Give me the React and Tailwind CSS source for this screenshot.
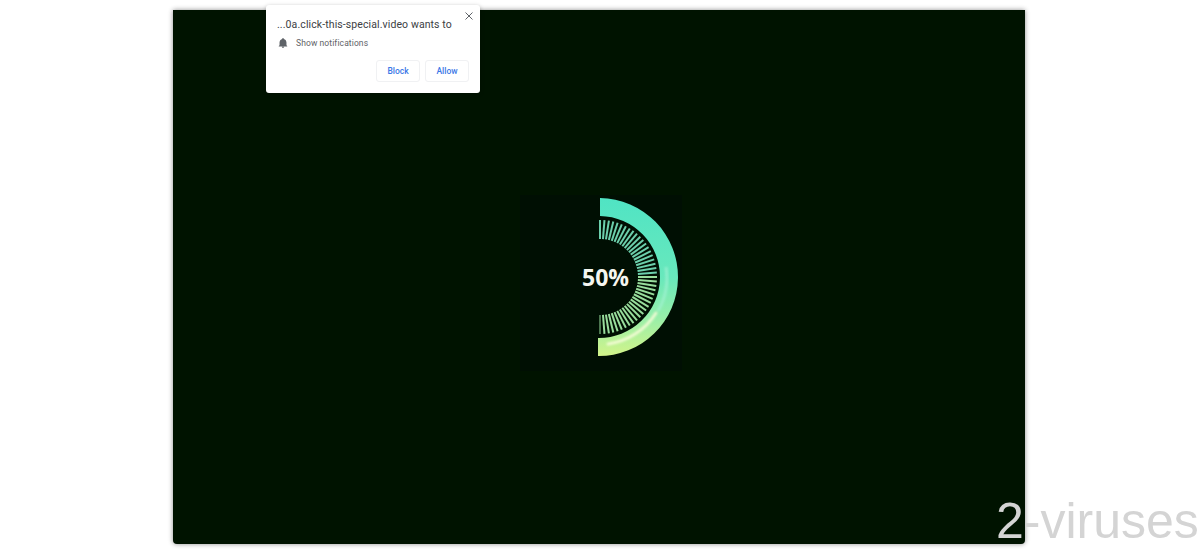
const CX = 80;
const CY = 82;

// tick marks of the inner half ring
const ticks = Array.from({ length: 41 }, (_, i) => {
  const a = (-90 + (i * 180) / 40) * (Math.PI / 180);
  return {
    x1: CX + 38 * Math.cos(a),
    y1: CY + 38 * Math.sin(a),
    x2: CX + 57 * Math.cos(a),
    y2: CY + 57 * Math.sin(a),
  };
});

const Spinner = () => (
  <div className="relative w-[162px] h-[176px] bg-[#000f03]">
    <svg width="162" height="176" viewBox="0 0 162 176" className="block">
      <defs>
        <linearGradient id="band" x1="0" y1="0" x2="0" y2="1">
          <stop offset="0" stopColor="#50e4c4" />
          <stop offset="0.5" stopColor="#68e8bc" />
          <stop offset="0.75" stopColor="#96eeaa" />
          <stop offset="1" stopColor="#d2f48a" />
        </linearGradient>
        <filter id="soft" x="-20%" y="-20%" width="140%" height="140%">
          <feGaussianBlur stdDeviation="1.2" />
        </filter>
      </defs>
      <path d="M80 3 A79 79 0 0 1 78 161 L78 143 A61 61 0 0 0 80 21 Z" fill="url(#band)" />
      <path d="M146 72 A67 67 0 0 1 138 116" fill="none" stroke="#a8f4d8" strokeWidth="3" opacity="0.6" filter="url(#soft)" />
      <path d="M136 118 A68 68 0 0 1 88 149" fill="none" stroke="#f6fcd8" strokeWidth="3" strokeLinecap="round" opacity="0.9" filter="url(#soft)" />
      {ticks.map((t, i) => (
        <line
          key={i}
          x1={t.x1}
          y1={t.y1}
          x2={t.x2}
          y2={t.y2}
          stroke={i < 20 ? '#6ccfac' : '#98dd9c'}
          strokeWidth="2"
          opacity={i === 40 ? 0.5 : 1}
        />
      ))}
    </svg>
    <span className="absolute left-[62px] top-[67px] font-['Open_Sans',sans-serif] font-bold text-[23px] leading-[30px] text-[#f4f6f0]">
      50%
    </span>
  </div>
);

const Popup = () => (
  <div className="absolute left-[266px] top-[5px] w-[214px] h-[88px] bg-white rounded-[3px] shadow-[0_1px_4px_rgba(0,0,0,0.25)] px-[11px] pt-[13px] font-['Roboto',sans-serif]">
    <button className="absolute right-[7px] top-[7px]">
      <svg width="8" height="8" viewBox="0 0 8 8" className="block">
        <path d="M0.5 0.5 L7.5 7.5 M7.5 0.5 L0.5 7.5" stroke="#5f6368" strokeWidth="1" />
      </svg>
    </button>
    <div className="text-[10.500px] leading-[13px] tracking-[0.1px] text-[#3c4043] whitespace-nowrap">...0a.click-this-special.video wants to</div>
    <div className="flex items-center mt-[6px] h-[12px]">
      <svg width="10" height="10" viewBox="0 0 24 26" className="block ml-[1px]">
        <path d="M12 26c1.600 0 3-1.300 3-3H9c0 1.700 1.300 3 3 3zm9-7v-7c0-4.600-2.500-8.400-7-9.500V1.500C14 .7 13.100 0 12 0s-2 .7-2 1.500v1C5.500 3.600 3 7.400 3 12v7l-2 2v1h22v-1l-2-2z" fill="#5f6368" />
      </svg>
      <span className="ml-[8px] text-[8.500px] tracking-[0.1px] text-[#5f6368] whitespace-nowrap">Show notifications</span>
    </div>
    <div className="flex justify-end gap-[5px] mt-[11px]">
      <button className="w-[44px] h-[22px] rounded-[3px] border border-[#f0f1f3] text-[8.500px] font-medium text-[#3b78e7]">Block</button>
      <button className="w-[44px] h-[22px] rounded-[3px] border border-[#f0f1f3] text-[8.500px] font-medium text-[#3b78e7]">Allow</button>
    </div>
  </div>
);

const App = () => (
  <div className="relative w-[1200px] h-[550px] bg-white overflow-hidden pl-[173px] pt-[10px]">
    <div className="w-[852px] h-[534px] bg-[#001300] rounded-b-[4px] shadow-[0_0_5px_rgba(0,0,0,0.45)] flex pl-[347px] pt-[185px]">
      <Spinner />
    </div>
    <Popup />
    <div className="absolute left-[996px] top-[491px] font-['Liberation_Sans',sans-serif] text-[50px] leading-[60px] text-[#d4d4d4] whitespace-nowrap">
      2-viruses
    </div>
  </div>
);

export default App;
